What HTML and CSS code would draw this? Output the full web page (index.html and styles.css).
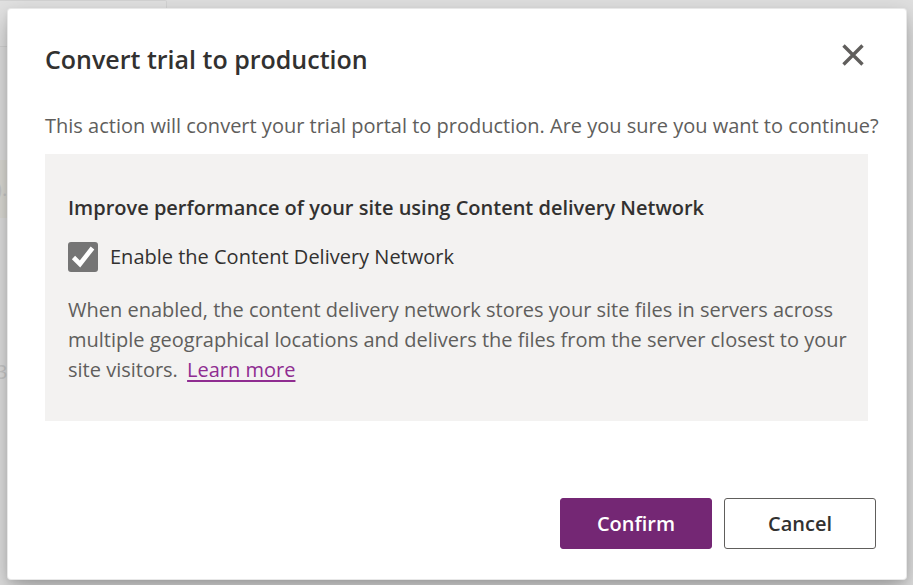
FILE: index.html
```html
<!DOCTYPE html>
<html lang="en">
<head>
<meta charset="utf-8">
<meta name="viewport" content="width=device-width, initial-scale=1">
<title>Convert trial to production</title>
<link rel="stylesheet" href="styles.css">
</head>
<body>
<div class="backdrop" aria-hidden="true">
  <div class="backdrop-card"></div>
  <div class="backdrop-gap"></div>
  <div class="backdrop-notice"><span>).</span></div>
  <div class="backdrop-row"><span>3</span></div>
</div>
<main class="dialog" role="dialog" aria-labelledby="dialog-title">
  <header class="dialog-header">
    <h1 id="dialog-title">Convert trial to production</h1>
    <button class="close" type="button" aria-label="Close">
      <svg viewBox="0 0 22 22" width="22" height="22"><path d="M1.500 1.500 20.500 20.500M20.500 1.500 1.500 20.500" fill="none" stroke="#605e5c" stroke-width="3.400"/></svg>
    </button>
  </header>
  <p class="intro">This action will convert your trial portal to production. Are you sure you want to continue?</p>
  <section class="panel">
    <h2>Improve performance of your site using Content delivery Network</h2>
    <label class="option">
      <span class="check">
        <input type="checkbox" checked>
        <svg viewBox="0 0 30 30" width="30" height="30"><path d="M5.500 15.500 12 22 24.500 6" fill="none" stroke="#fff" stroke-width="4.600"/></svg>
      </span>
      <span>Enable the Content Delivery Network</span>
    </label>
    <p class="details">When enabled, the content delivery network stores your site files in servers across multiple geographical locations and delivers the files from the server closest to your site visitors. <a href="#">Learn more</a></p>
  </section>
  <footer class="actions">
    <button class="button primary" type="button">Confirm</button>
    <button class="button" type="button">Cancel</button>
  </footer>
</main>
</body>
</html>
```
FILE: styles.css
```css
* {
  box-sizing: border-box;
}

body {
  margin: 0;
  min-height: 100vh;
  display: grid;
  overflow: hidden;
  background: #dfdfdf;
  color: #323130;
  font-family: "Segoe UI", "Open Sans", sans-serif;
  font-size: 20px;
  line-height: 30px;
}

.backdrop,
.dialog {
  grid-area: 1 / 1;
  min-width: 0;
}

.backdrop {
  color: #c8c8c8;
}

.backdrop-card {
  width: 167px;
  height: 47px;
  border: 1px solid #d3d3d3;
  border-left: 0;
  border-top-right-radius: 2px;
  background: #e1e1e1;
}

.backdrop-gap {
  height: 113px;
}

.backdrop-notice {
  width: 50px;
  padding: 14px 0;
  background: #dcdbd5;
}

.backdrop-row {
  padding-top: 139px;
}

.backdrop span {
  display: block;
  margin-left: -4px;
}

.dialog {
  display: flex;
  flex-direction: column;
  margin: 9px 7px 6px 8px;
  padding: 30px;
  padding-left: 37px;
  border-radius: 3px;
  background: #fff;
  box-shadow: 0 0 0 1px #e8e8e8, 0 10px 24px rgba(0, 0, 0, 0.3), 0 2px 6px rgba(0, 0, 0, 0.08);
}

.dialog-header {
  display: flex;
  justify-content: space-between;
  align-items: flex-start;
}

h1 {
  margin: 0;
  font-size: 25px;
  line-height: 40px;
  font-weight: 600;
}

.close {
  display: flex;
  margin: 5px 12px;
  padding: 0;
  border: 0;
  background: none;
}

.intro {
  margin: 32px -16px 13px 0;
  color: #605e5c;
}

.panel {
  margin-right: 8px;
  padding: 39px 12px 36px;
  padding-left: 23px;
  background: #f3f2f1;
}

h2 {
  margin: 0;
  font-size: 20px;
  line-height: 30px;
  font-weight: 600;
}

.option {
  display: flex;
  align-items: center;
  gap: 12px;
  margin-top: 19px;
}

.check {
  display: grid;
}

.check input,
.check svg {
  grid-area: 1 / 1;
}

.check input {
  appearance: none;
  width: 30px;
  height: 30px;
  margin: 0;
  border-radius: 3px;
  background: #757575;
}

.check svg {
  pointer-events: none;
  visibility: hidden;
}

.check input:checked + svg {
  visibility: visible;
}

.details {
  margin: 23px 0 0;
  color: #605e5c;
}

.details a {
  margin-left: 4px;
  color: #8f2d91;
  text-decoration-thickness: 2px;
  text-underline-offset: 3px;
}

.actions {
  display: flex;
  justify-content: flex-end;
  gap: 12px;
  margin-top: auto;
}

.button {
  width: 152px;
  height: 51px;
  border: 1px solid #605e5c;
  border-radius: 3px;
  background: #fff;
  color: #323130;
  font: inherit;
  font-weight: 600;
}

.primary {
  border-color: #742774;
  background: #742774;
  color: #fff;
}
```
